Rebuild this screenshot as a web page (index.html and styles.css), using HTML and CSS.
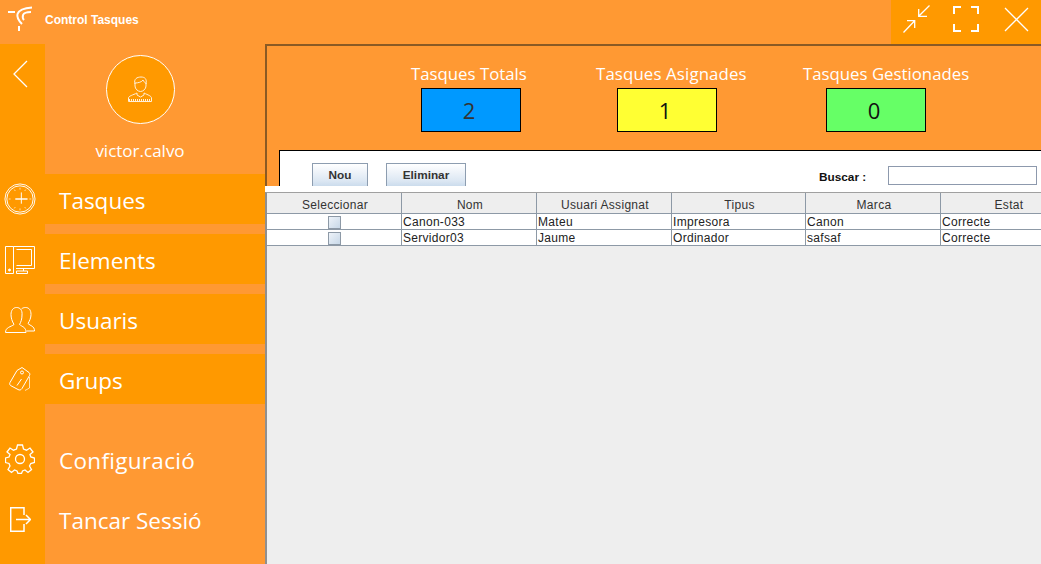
FILE: index.html
```html
<!DOCTYPE html>
<html lang="ca">
<head>
<meta charset="utf-8">
<title>Control Tasques</title>
<link rel="stylesheet" href="styles.css">
</head>
<body>
<div class="app">
  <header class="titlebar">
    <svg class="logo" width="28" height="32" viewBox="0 0 28 32" fill="none" stroke="#fff" stroke-width="2"><path d="M0 8H7M24 3.500C16 4 11 6 9.500 10C8.500 14 11 17 14 20M23 8C19 8 16 8.500 15 11C14.500 13 15 15 16 16M11 22V27"/></svg>
    <span class="apptitle">Control Tasques</span>
    <div class="winctl">
      <svg width="27" height="28" viewBox="0 0 27 28" fill="none" stroke="#fff" stroke-width="1.300"><path d="M26.500 .5L15.700 11.300M15.700 4V11.300H24M.5 27.500L11.700 15.700M4 15.700H11.700V23"/></svg>
      <svg width="26" height="26" viewBox="0 0 26 26" fill="none" stroke="#fff" stroke-width="2"><path d="M1 8V1H8M18 1H25V8M25 18V25H18M8 25H1V18"/></svg>
      <svg width="25" height="25" viewBox="0 0 25 25" fill="none" stroke="#fff" stroke-width="1.300"><path d="M1 1L24 24M24 1L1 24"/></svg>
    </div>
  </header>
  <div class="body">
    <aside class="sidebar">
      <div class="profile">
        <div class="railcell"><svg class="back" width="16" height="28" viewBox="0 0 16 28" fill="none" stroke="#fff" stroke-width="1.300"><path d="M15 1L2 14L15 27"/></svg></div>
        <div class="usercard">
          <div class="avatar"><svg class="person" width="24" height="27" viewBox="0 0 24 27" fill="none" stroke="#fff" stroke-width="1"><path d="M7 8C5.500 3 9 1 13 1C17 1 19 3 18 8M7 7V10C7 13 10 15.500 12.500 15.500C15 15.500 18 13 18 10V7M7 7C10 7 14 6 15 4C16 6 17 7 18 7"/><path d="M.5 25.500V22C.5 20 5 19 9 17V19L12.500 21L16 19V17C20 19 23.500 20 23.500 22V25.500Z"/><path d="M1 24H23" stroke-width="2" stroke-dasharray="1 1"/></svg></div>
          <div class="username">victor.calvo</div>
        </div>
      </div>
      <nav class="menu">
        <div class="row r1"><div class="railcell"><svg width="32" height="32" viewBox="0 0 34 34" fill="none" stroke="#fff"><circle cx="17" cy="17" r="16"/><circle cx="17" cy="17" r="14"/><path d="M18.500 10V22" stroke-width="1.300" opacity=".8"/><path d="M12 17H25" stroke-width="1.800" opacity=".85"/><path d="M17 5V7M17 27V29M5 17H7M27 17H29M11 7L12 8.500M23 7L22 8.500M11 27L12 25.500M23 27L22 25.500" opacity=".7"/></svg></div><div class="cell"><a class="item">Tasques</a></div></div>
        <div class="row r2"><div class="railcell"><svg width="30" height="28" viewBox="0 0 30 28" fill="none" stroke="#fff"><path d="M.5 .5H8.500V27.500H.5ZM8.500 .5H29.500V22.500H11M11.500 3.500H26.500V19.500H11.500M18.500 22.500V25M11.500 25H22.500V27.500H11.500Z"/><circle cx="4.500" cy="24" r="1" fill="#fff"/></svg></div><div class="cell"><a class="item">Elements</a></div></div>
        <div class="row r3"><div class="railcell"><svg width="30" height="26" viewBox="0 0 30 26" fill="none" stroke="#fff"><path d="M.5 25.500C.5 20 6 20 9 17.500C7 14 6 11 6 7.500C6 3 8.500 .5 11.500 .5C15 .5 17.500 3 17 8C17 12 16 15 14.500 17.500C17.500 20 21 20 21 25.500Z"/><path d="M16.500 2C17.500 1 19 .5 20.500 .5C24 .5 26 3 26 7.500C26 11 24.500 14 23 16.500C25.500 19 29.500 19 29.500 24H21.500"/></svg></div><div class="cell"><a class="item">Usuaris</a></div></div>
        <div class="row r4"><div class="railcell"><svg width="22" height="24" viewBox="0 0 22 24" fill="none" stroke="#fff"><path d="M8 3.500L13 .5L20 5.500C21 6.500 21 7.500 20.500 8.500L13 21.500C12 23 10.500 23.500 9 22.500L1.500 18.500C.5 17.500 .5 16.500 1 15.500Z"/><path d="M12.500 12L8 18.500" stroke-width="1"/><circle cx="13" cy="5.500" r="1.500"/><path d="M20.500 10V21L16 23.500" opacity=".7"/></svg></div><div class="cell"><a class="item">Grups</a></div></div>
        <div class="row r5"><div class="railcell"><svg width="30" height="30" viewBox="0 0 30 30" fill="none" stroke="#fff" stroke-width="1.300"><circle cx="15" cy="15" r="4.500"/><path d="M12.500 1H17.500L18.500 5L21.500 6.200L25 4L28 8L25 10.500L25.800 13L29.500 14V18.500L25.800 19.500L24.500 22L26.500 25.500L23 28.500L20 26L17.500 27L16.500 29.500H13L12 27L9.500 26L6.500 28.500L3 25.500L5 22L4 19.500L.5 18.500V14L4 13L5 10.500L2 8L5 4L8.500 6.200L11.500 5Z"/></svg></div><div class="cell"><a class="item">Configuració</a></div></div>
        <div class="row r6"><div class="railcell"><svg width="21" height="25" viewBox="0 0 21 25" fill="none" stroke="#fff" stroke-width="1.500"><path d="M14 8V.7H.7V24.300H14V17M6 12.500H20M16 8L20.500 12.500L16 17"/></svg></div><div class="cell"><a class="item">Tancar Sessió</a></div></div>
      </nav>
    </aside>
    <main class="main">
      <section class="stats">
        <div class="stat s1"><div class="statlabel">Tasques Totals</div><div class="statbox blue">2</div></div>
        <div class="stat s2"><div class="statlabel">Tasques Asignades</div><div class="statbox yellow">1</div></div>
        <div class="stat s3"><div class="statlabel">Tasques Gestionades</div><div class="statbox green">0</div></div>
      </section>
      <div class="toolwrap">
        <section class="toolbar">
          <button class="btn nou">Nou</button>
          <button class="btn del">Eliminar</button>
          <label class="searchlabel">Buscar :</label>
          <input class="search" type="text" aria-label="Buscar">
        </section>
      </div>
      <div class="strip"></div>
      <div class="tablewrap">
        <table class="grid">
          <colgroup><col class="c1"><col class="c2"><col class="c2"><col class="c3"><col class="c2"><col class="c2"></colgroup>
          <thead><tr><th>Seleccionar</th><th>Nom</th><th>Usuari Assignat</th><th>Tipus</th><th>Marca</th><th>Estat</th></tr></thead>
          <tbody>
            <tr><td class="chk"><span class="check"></span></td><td>Canon-033</td><td>Mateu</td><td>Impresora</td><td>Canon</td><td>Correcte</td></tr>
            <tr><td class="chk"><span class="check"></span></td><td>Servidor03</td><td>Jaume</td><td>Ordinador</td><td>safsaf</td><td>Correcte</td></tr>
          </tbody>
        </table>
      </div>
    </main>
  </div>
</div>
</body>
</html>
```
FILE: styles.css
```css
* { box-sizing: border-box; }
html, body { margin: 0; height: 100%; overflow: hidden; }
.app { width: 1041px; height: 564px; display: flex; flex-direction: column; background: #ff9933; font-family: "Open Sans", sans-serif; color: #fff; }
.titlebar { height: 44px; display: flex; align-items: center; padding-left: 8px; }
.logo { margin-right: 9px; margin-top: -4px; }
.apptitle { font: bold 12px "Liberation Sans", sans-serif; margin-top: -5px; }
.winctl { margin-left: auto; width: 150px; height: 44px; background: #ff9900; display: flex; align-items: center; padding: 0 0 6px 12px; }
.winctl svg:nth-child(2) { margin-left: 23px; }
.winctl svg:nth-child(3) { margin-left: 25px; }
.body { flex: 1; display: flex; min-height: 0; }
.sidebar { width: 265px; display: flex; flex-direction: column; }
.profile { display: flex; height: 130px; }
.railcell { width: 45px; background: #ff9900; display: flex; align-items: flex-start; justify-content: center; flex: none; padding-right: 5px; }
.railcell svg { display: block; }
.back { margin-top: 16px; margin-left: -1px; }
.usercard { flex: 1; display: flex; flex-direction: column; align-items: center; padding: 11px 30px 0 0; }
.avatar { width: 69px; height: 69px; border-radius: 50%; border: 1px solid #fff; background: #ff9900; display: flex; align-items: center; justify-content: center; }
.person { opacity: .85; }
.username { font-size: 17px; line-height: 24px; margin-top: 15px; }
.menu { flex: 1; display: flex; flex-direction: column; }
.row { display: flex; height: 60px; }
.cell { flex: 1; background: #ff9933; }
.item { display: flex; align-items: center; height: 50px; padding: 2px 0 0 14px; background: #ff9900; font-size: 22.500px; }
.r1 .railcell { padding-top: 9px; }
.r2 .railcell { padding-top: 12px; }
.r3 .railcell { padding-top: 13px; }
.r4 .railcell { padding-top: 13px; padding-right: 6px; }
.r5 { height: 77px; }
.r5 .railcell { padding-top: 30px; }
.r5 .item { height: 60px; margin-top: 17px; padding: 0 0 2px 14px; background: none; letter-spacing: .3px; }
.r6 { flex: 1; }
.r6 .railcell { padding-top: 16px; padding-right: 4px; }
.r6 .item { height: 60px; padding: 0 0 2px 14px; background: none; }
.main { flex: 1; min-width: 0; border-top: 2px solid #8a5a24; display: flex; flex-direction: column; background: #eeeeee; }
.stats { height: 104px; background: #ff9933; display: flex; border-left: 2px solid #8a5a24; padding-left: 144px; padding-top: 16px; }
.stat { display: flex; flex-direction: column; align-items: flex-start; }
.s1 { width: 185px; }
.s2 { width: 207px; }
.statlabel { font-size: 16.800px; line-height: 24px; height: 26px; white-space: nowrap; }
.s2 .statlabel { letter-spacing: .15px; }
.statbox { width: 100px; height: 44px; border: 1px solid #000; display: flex; align-items: center; justify-content: center; padding-right: 4px; font-size: 22px; color: #222; }
.s1 .statbox { margin-left: 10px; }
.s2 .statbox { margin-left: 21px; }
.s3 .statbox { margin-left: 23px; }
.blue { background: #0099ff; color: #333; }
.yellow { background: #ffff33; color: #111; }
.green { background: #66ff66; color: #111; }
.toolwrap { background: #ff9933; border-left: 2px solid #8a5a24; padding-left: 12px; }
.toolbar { height: 36px; background: #fff; border-top: 1px solid #000; border-left: 1px solid #000; overflow: hidden; display: flex; align-items: flex-start; padding-top: 12px; padding-left: 32px; font: bold 11.800px "Liberation Sans", sans-serif; color: #222; }
.btn { height: 30px; flex: none; border: 1px solid #8d9db0; background: linear-gradient(#ffffff, #dce7f3 60%, #b8cfe5); font: bold 11.800px "Liberation Sans", sans-serif; color: #333; padding: 0 0 6px; }
.nou { width: 56px; margin-right: 18px; }
.del { width: 80px; }
.searchlabel { margin-left: 353px; margin-top: 7px; color: #111; }
.search { width: 149px; height: 19px; margin-left: 22px; margin-top: 3px; border: 1px solid #8d99ad; background: #fff; flex: none; }
.strip { height: 6px; background: #fff; }
.tablewrap { flex: 1; overflow: hidden; border-top: 1px solid #a0a0a0; border-left: 2px solid #8f8f8f; }
.grid { border-collapse: separate; border-spacing: 0; table-layout: fixed; width: 809px; font: 12px "Liberation Sans", sans-serif; letter-spacing: .3px; color: #222; }
.c1 { width: 135px; }
.c2 { width: 135px; }
.c3 { width: 134px; }
.grid th { height: 21px; font-weight: normal; background: #eeeeee; color: #333; border-right: 1px solid #8d99a6; border-bottom: 1px solid #8d99a6; padding: 3px 0 0 2px; text-align: center; }
.grid td { height: 16px; background: #fff; border-right: 1px solid #8d99a6; border-bottom: 1px solid #8d99a6; padding: 0 0 0 1px; line-height: 14px; white-space: nowrap; overflow: hidden; }
.grid .chk { text-align: center; padding: 0; }
.check { display: block; width: 13px; height: 13px; margin: 1px auto 0; border: 1px solid #8d99a6; background: linear-gradient(135deg, #eef3f9, #c8d8e8); }
```
